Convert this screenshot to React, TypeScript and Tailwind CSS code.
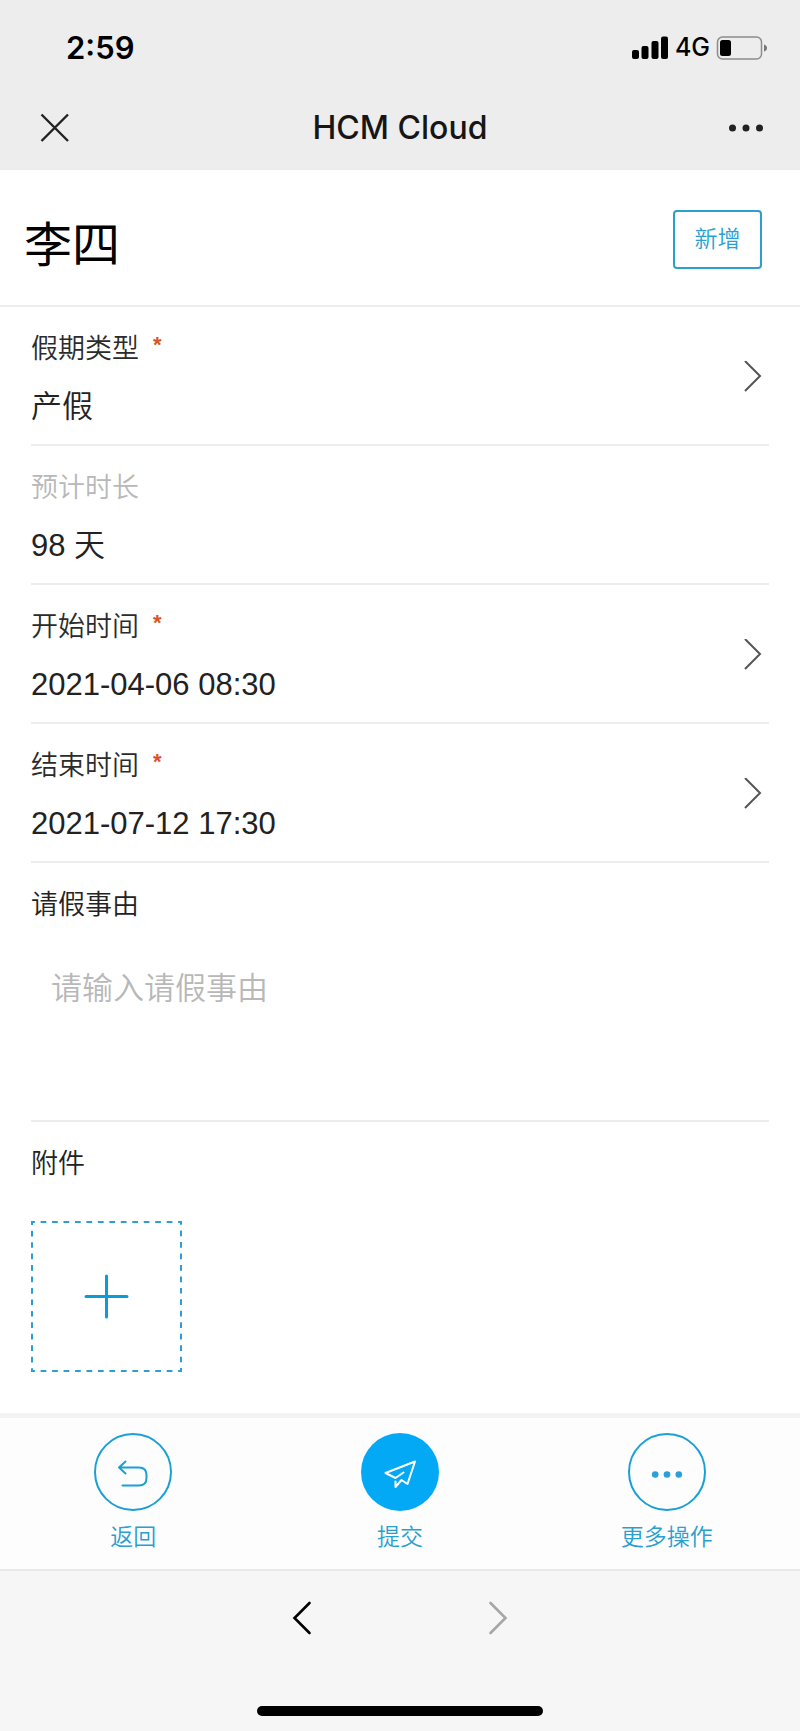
import { useState } from 'react'

type FieldProps = {
  label: string
  value: string
  required?: boolean
  readOnly?: boolean
}

function Chevron() {
  return (
    <svg className="mr-[7px] h-8 w-[18px] shrink-0" viewBox="0 0 18 32" fill="none" stroke="#555" strokeWidth="2">
      <path d="M1 0 L16 15 L1 30" />
    </svg>
  )
}

function Field({ label, value, required, readOnly }: FieldProps) {
  const body = (
    <span className="flex flex-col gap-[9px]">
      <span className={`flex text-[27px] leading-[52px] ${readOnly ? 'text-[#b8b8b8]' : 'text-[#2b2b2b]'}`}>
        {label}
        {required && <span className="ml-[14px] text-[22px] leading-[44px] font-bold text-[#d9532c]">*</span>}
      </span>
      <span className="text-[31px] leading-[46px] text-[#222]">{value}</span>
    </span>
  )

  if (readOnly) {
    return <div className="border-b-2 border-[#ededed] pt-4 pb-[14px]">{body}</div>
  }
  return (
    <button type="button" className="flex w-full items-center justify-between border-b-2 border-[#ededed] pt-4 pb-[14px] text-left">
      {body}
      <Chevron />
    </button>
  )
}

function StatusBar() {
  return (
    <div className="flex h-24 items-center justify-between pr-8 pl-[66px] text-black">
      <span className="text-[31px] font-semibold">2:59</span>
      <div className="flex items-center">
        <svg className="h-6 w-[38px]" viewBox="0 0 38 24" fill="#000">
          <rect x="1" y="14" width="7" height="9" rx="2" />
          <rect x="10.5" y="10" width="7" height="13" rx="2" />
          <rect x="20.5" y="5" width="7" height="18" rx="2" />
          <rect x="30" y="0.5" width="7" height="22.5" rx="2" />
        </svg>
        <span className="mx-[6px] text-[25px] font-medium">4G</span>
        <svg className="h-6 w-[52px]" viewBox="0 0 52 24">
          <rect x="1.5" y="1" width="44" height="22" rx="5" fill="none" stroke="#8c8c8c" strokeWidth="1.5" />
          <rect x="4" y="4" width="11" height="16" rx="2.5" fill="#000" />
          <path d="M48 8.5 Q51 9.5 51 12 Q51 14.5 48 15.5 Z" fill="#777" />
        </svg>
      </div>
    </div>
  )
}

export default function App() {
  const [reason, setReason] = useState('')

  return (
    <div className="flex min-h-screen flex-col bg-white font-['Liberation_Sans','Noto_Sans_CJK_SC',sans-serif] font-[350]">
      <header className="bg-[#ededed] pb-[10px] font-[Inter,'Noto_Sans_CJK_SC',sans-serif]">
        <StatusBar />
        <div className="grid h-16 grid-cols-3 items-center px-9 text-[#161616]">
          <button type="button" aria-label="关闭" className="w-fit pl-1">
            <svg className="h-[30px] w-[30px]" viewBox="0 0 30 30" fill="none" stroke="#222" strokeWidth="2.4">
              <path d="M1.5 1.5 L28 28 M28 1.5 L1.5 28" />
            </svg>
          </button>
          <h1 className="text-center text-[32px] font-[450] whitespace-nowrap">HCM Cloud</h1>
          <button type="button" aria-label="更多" className="justify-self-end">
            <svg className="h-2 w-9" viewBox="0 0 36 8" fill="#222">
              <circle cx="4.5" cy="4" r="3.5" />
              <circle cx="18" cy="4" r="3.5" />
              <circle cx="31.5" cy="4" r="3.5" />
            </svg>
          </button>
        </div>
      </header>

      <div className="flex items-start justify-between border-b-2 border-[#ededed] pt-10 pr-[38px] pb-[23px] pl-6">
        <h2 className="text-5xl leading-[72px] font-normal text-black">李四</h2>
        <button type="button" className="h-[59px] w-[89px] rounded border-2 border-[#2a9fd0] text-[23px] text-[#2a9fd0]">
          新增
        </button>
      </div>

      <main className="grow px-[31px] pb-[41px]">
        <Field label="假期类型" value="产假" required />
        <Field label="预计时长" value="98 天" readOnly />
        <Field label="开始时间" value="2021-04-06 08:30" required />
        <Field label="结束时间" value="2021-07-12 17:30" required />

        <div className="flex flex-col border-b-2 border-[#ededed] pt-4">
          <label htmlFor="reason" className="text-[27px] leading-[52px] text-[#222]">请假事由</label>
          <textarea
            id="reason"
            value={reason}
            onChange={(e) => setReason(e.target.value)}
            placeholder="请输入请假事由"
            className="h-[189px] resize-none px-5 pt-[35px] text-[31px] leading-[46px] text-[#222] outline-none placeholder:text-[#b8b8b8]"
          />
        </div>

        <div className="pt-4">
          <p className="text-[27px] leading-[52px] text-[#222]">附件</p>
          <button type="button" aria-label="添加附件" className="mt-[31px] block">
            <svg className="h-[151px] w-[151px]" viewBox="0 0 151 151" fill="none">
              <rect x="1" y="1" width="149" height="149" stroke="#2a9fd0" strokeWidth="2" strokeDasharray="5.73 5.73" strokeDashoffset="2.86" />
              <path d="M75.5 55 V96 M55 75.5 H96" stroke="#0d9bd8" strokeWidth="3" strokeLinecap="round" />
            </svg>
          </button>
        </div>
      </main>

      <div className="grid grid-cols-3 border-t-[5px] border-b-2 border-t-[#f3f3f3] border-b-[#e8e8e8] bg-[#fdfdfd] pt-[15px] pb-4 text-[23px] leading-8 text-[#2a9fd0]">
        <button type="button" className="flex flex-col items-center gap-[10px]">
          <span className="flex h-[78px] w-[78px] items-center justify-center rounded-full border-2 border-[#1ba0d6]">
            <svg className="h-8 w-8" viewBox="0 0 32 32" fill="none" stroke="#1ba0d6" strokeWidth="2" strokeLinecap="round" strokeLinejoin="round">
              <path d="M8.5 5.5 L2 11.5 L8.5 17.5 M2 11.5 H22 Q29.5 11.5 29.5 19 V22 Q29.5 29.5 22 29.5 H5.5" />
            </svg>
          </span>
          返回
        </button>
        <button type="button" className="flex flex-col items-center gap-[10px]">
          <span className="flex h-[78px] w-[78px] items-center justify-center rounded-full bg-[#03a9f4]">
            <svg className="h-8 w-8" viewBox="0 0 32 32" fill="none" stroke="#fff" strokeWidth="2" strokeLinejoin="round" strokeLinecap="round">
              <path d="M19.5 16.5 L11.5 22 L1.5 17 L31 5.5 L23.5 28 L17.5 24 L11.5 31 L11.5 25.5" />
            </svg>
          </span>
          提交
        </button>
        <button type="button" className="flex flex-col items-center gap-[10px]">
          <span className="flex h-[78px] w-[78px] items-center justify-center rounded-full border-2 border-[#1ba0d6]">
            <svg className="h-8 w-8" viewBox="0 0 32 32" fill="#2a9fd8">
              <circle cx="4.2" cy="18.5" r="3.3" />
              <circle cx="16" cy="18.5" r="3.3" />
              <circle cx="27.8" cy="18.5" r="3.3" />
            </svg>
          </span>
          更多操作
        </button>
      </div>

      <footer className="flex flex-col items-center bg-[#f6f6f6] pt-[30px] pb-[15px]">
        <nav className="flex gap-[176px]">
          <button type="button" aria-label="后退">
            <svg className="h-[34px] w-5" viewBox="0 0 20 34" fill="none" stroke="#000" strokeWidth="2.6" strokeLinecap="round">
              <path d="M17.5 2 L2.5 17 L17.5 32" />
            </svg>
          </button>
          <button type="button" aria-label="前进">
            <svg className="h-[34px] w-5" viewBox="0 0 20 34" fill="none" stroke="#a6a6a6" strokeWidth="2.6" strokeLinecap="round">
              <path d="M2.5 2 L17.5 17 L2.5 32" />
            </svg>
          </button>
        </nav>
        <div className="mt-[71px] h-[10px] w-[286px] rounded-full bg-black" />
      </footer>
    </div>
  )
}
